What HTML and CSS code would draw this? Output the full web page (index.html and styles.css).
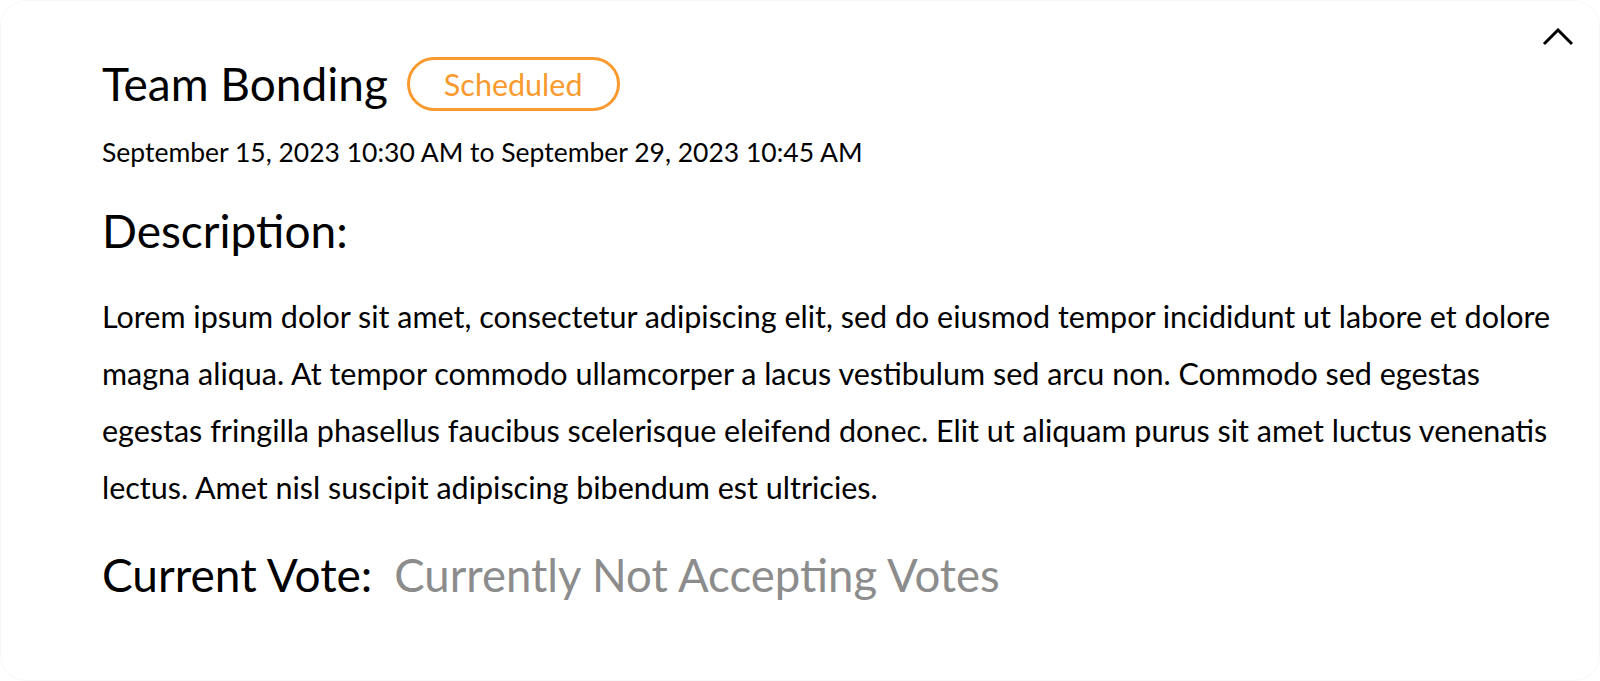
FILE: index.html
```html
<!DOCTYPE html>
<html lang="en">
<head>
<meta charset="utf-8">
<link rel="stylesheet" href="styles.css">
<title>Team Bonding</title>
</head>
<body>
<div class="card">
  <button class="collapse" aria-label="Collapse">
    <svg width="32" height="18" viewBox="0 0 32 18"><path d="M2 16 L16 2 L30 16" fill="none" stroke="#000" stroke-width="3"/></svg>
  </button>
  <div class="title-row">
    <h1 class="title">Team Bonding</h1>
    <span class="badge">Scheduled</span>
  </div>
  <div class="dates">September 15, 2023 10:30 AM to September 29, 2023 10:45 AM</div>
  <h2 class="section-title">Description:</h2>
  <p class="description">Lorem ipsum dolor sit amet, consectetur adipiscing elit, sed do eiusmod tempor incididunt ut labore et dolore magna aliqua. At tempor commodo ullamcorper a lacus vestibulum sed arcu non. Commodo sed egestas egestas fringilla phasellus faucibus scelerisque eleifend donec. Elit ut aliquam purus sit amet luctus venenatis lectus. Amet nisl suscipit adipiscing bibendum est ultricies.</p>
  <div class="vote-row">
    <span class="vote-label">Current Vote:</span>
    <span class="vote-value">Currently Not Accepting Votes</span>
  </div>
</div>
</body>
</html>
```
FILE: styles.css
```css
html, body {
  margin: 0;
  padding: 0;
  background: #ffffff;
}
body {
  font-family: Lato, "Open Sans", sans-serif;
  color: #000;
}
.card {
  position: relative;
  box-sizing: border-box;
  width: 1600px;
  height: 681px;
  border: 1px solid #f8f8f8;
  border-radius: 26px;
  background: #fff;
  padding: 55px 30px 0 101px;
}
.collapse {
  position: absolute;
  top: 26px;
  right: 24px;
  width: 34px;
  height: 20px;
  padding: 0;
  border: none;
  background: none;
  display: flex;
  align-items: center;
  justify-content: center;
}
.title-row {
  display: flex;
  align-items: center;
  gap: 19px;
}
.title {
  margin: 0;
  font-size: 46px;
  font-weight: 400;
  line-height: 1.2;
}
.badge {
  box-sizing: border-box;
  height: 54px;
  padding: 0 35px 0 34px;
  border: 3px solid #f99a2e;
  border-radius: 27px;
  color: #f99a2e;
  font-size: 30.5px;
  display: flex;
  align-items: center;
}
.dates {
  margin-top: 26px;
  font-size: 26.5px;
  line-height: 1.2;
}
.section-title {
  margin: 34px 0 0;
  font-size: 46px;
  font-weight: 400;
  line-height: 1.2;
}
.description {
  margin: 30px 0 0;
  font-size: 30.5px;
  line-height: 57px;
}
.vote-row {
  margin-top: 31px;
  display: flex;
  align-items: baseline;
  gap: 22px;
  font-size: 46px;
  line-height: 1.2;
}
.vote-value {
  font-size: 45.5px;
  color: #8c8c8c;
}
```
